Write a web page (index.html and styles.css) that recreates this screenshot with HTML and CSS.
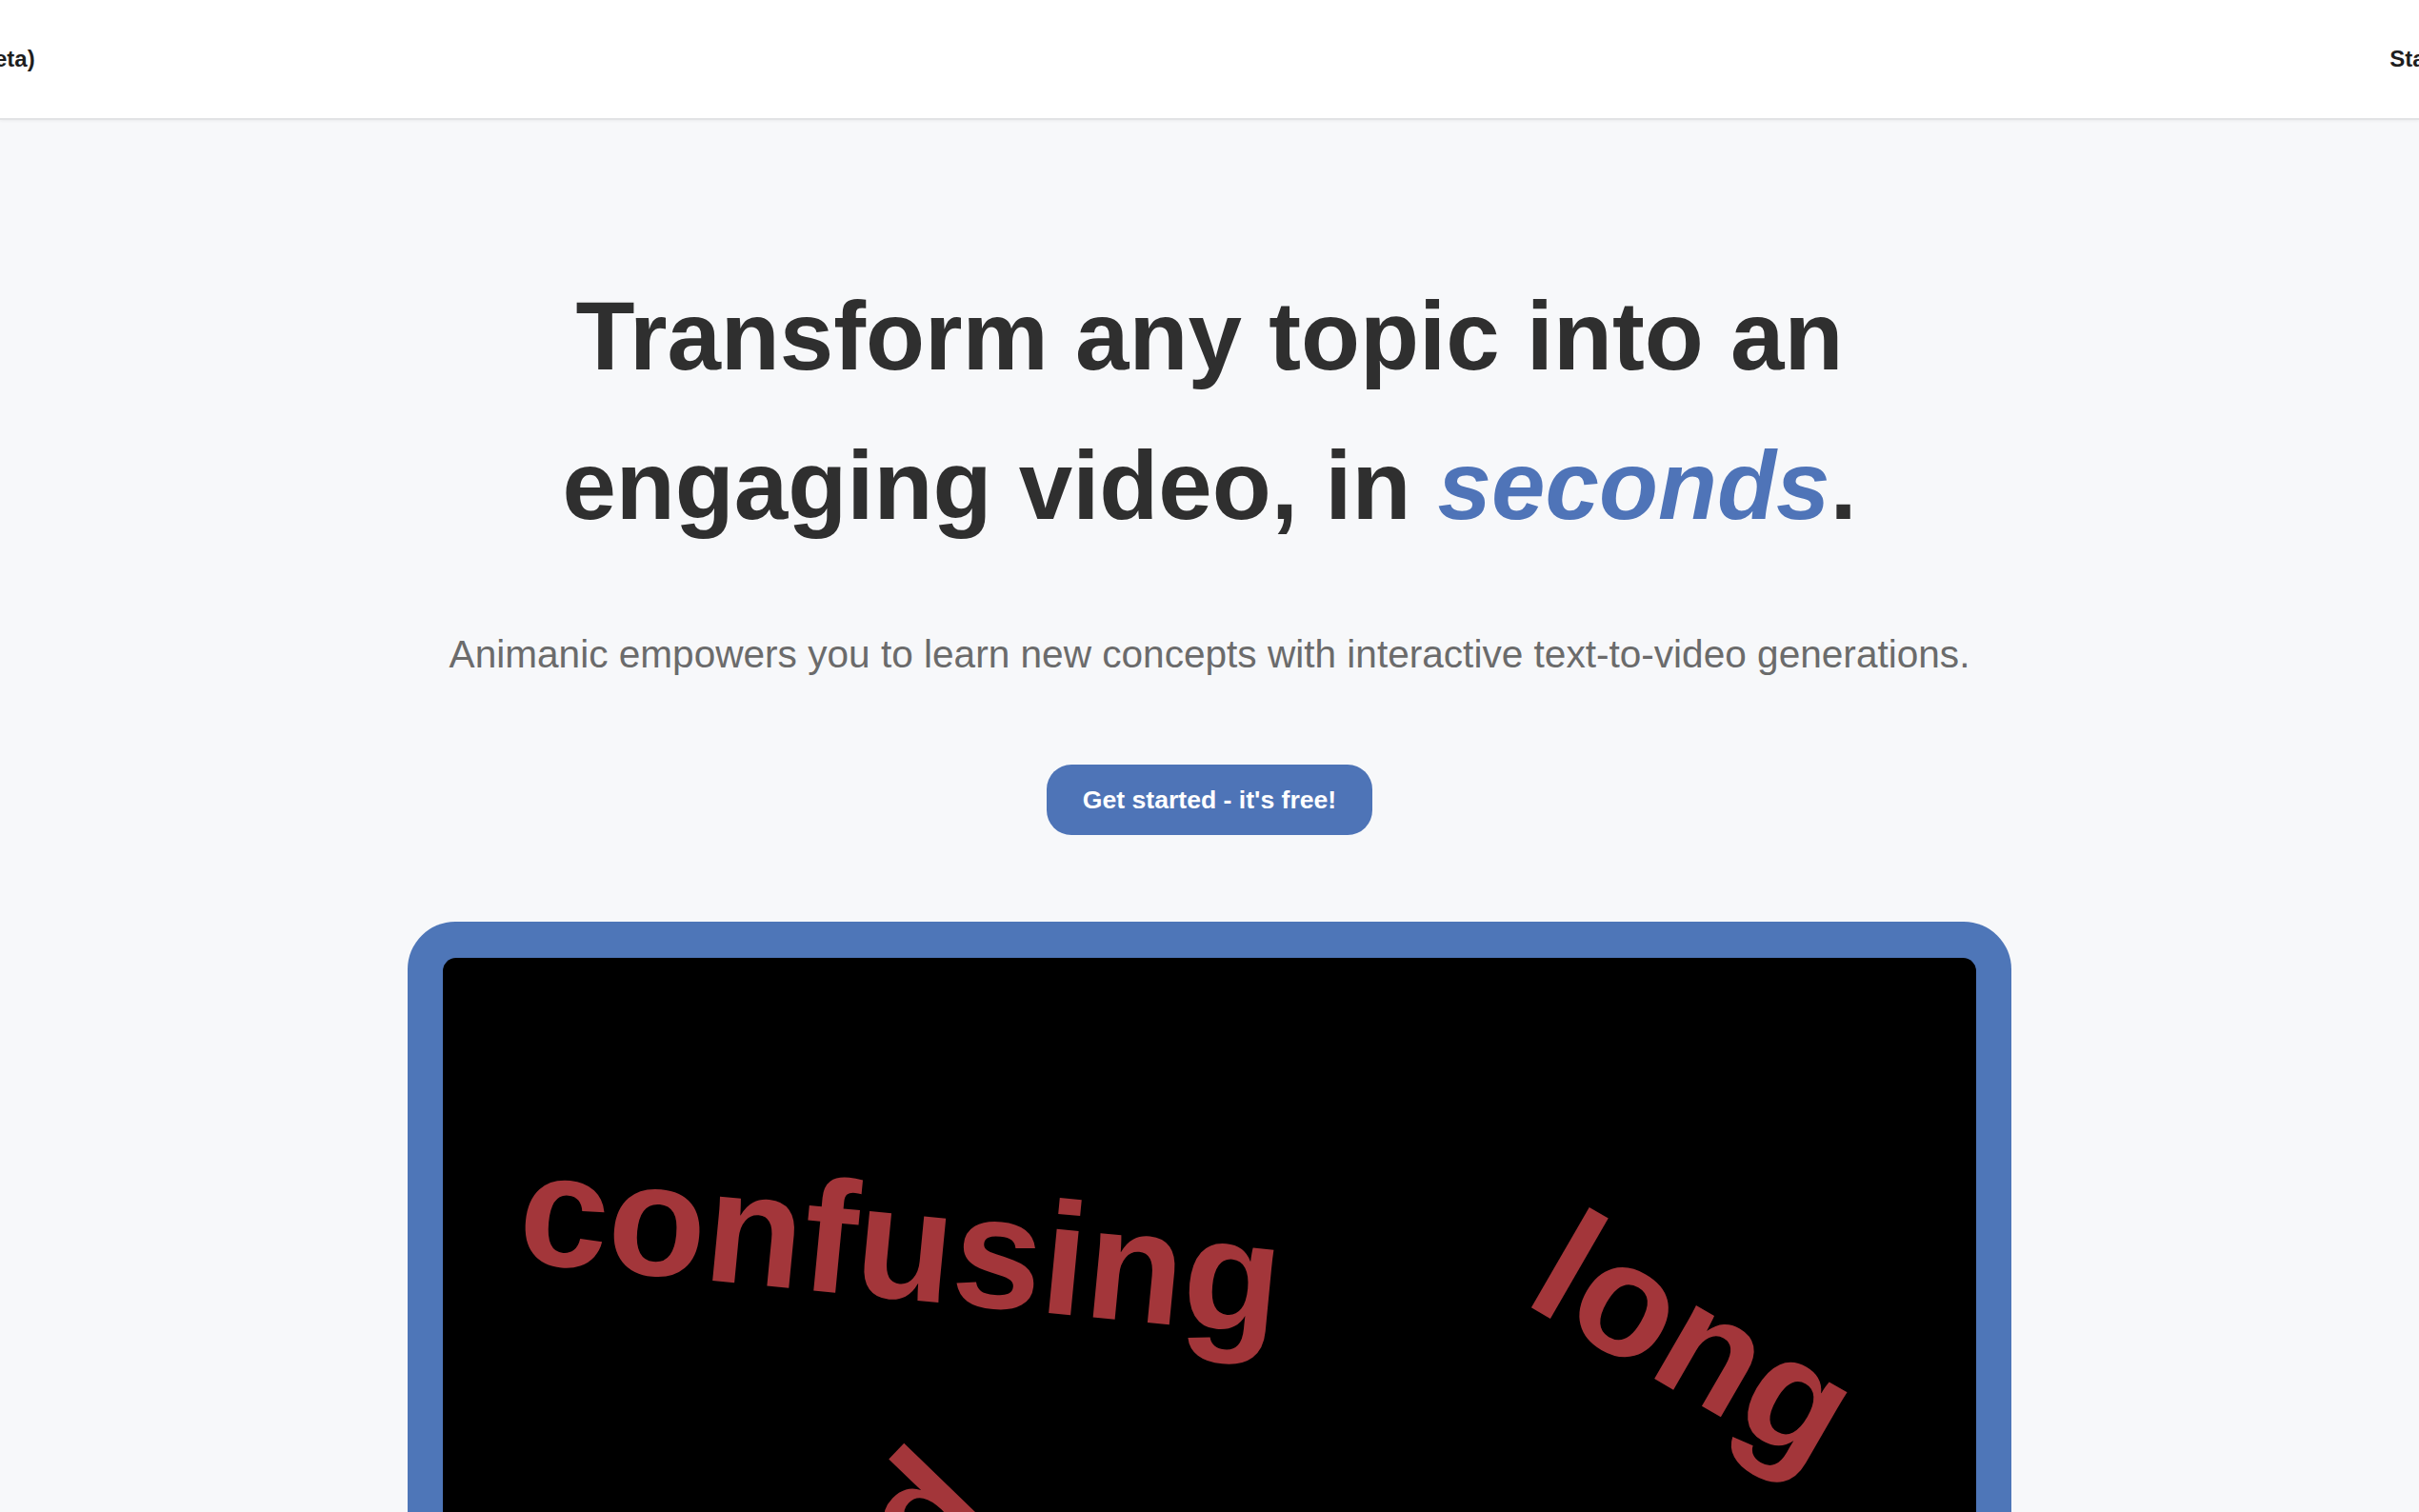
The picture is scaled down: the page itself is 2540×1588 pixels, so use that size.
FILE: index.html
```html
<!DOCTYPE html>
<html lang="en">
<head>
  <meta charset="UTF-8" />
  <meta name="viewport" content="width=device-width, initial-scale=1.0"/>
  <title>Animanic</title>
  <link rel="stylesheet" href="styles.css">
</head>
<body>
  <header class="topbar">
    <nav class="nav">
      <span class="brand">Animanic (Beta)</span>
      <a class="nav-link" href="#">Start creating</a>
    </nav>
  </header>

  <main class="hero">
    <h1 class="headline">Transform any topic into an<br>engaging video, in <em class="accent">seconds</em>.</h1>
    <p class="subtitle">Animanic empowers you to learn new concepts with interactive text-to-video generations.</p>
    <button class="cta">Get started - it's free!</button>

    <div class="frame">
      <div class="screen">
        <span class="word word-confusing">confusing</span>
        <span class="word word-long">long</span>
        <span class="word word-hard">hard</span>
      </div>
    </div>
  </main>
</body>
</html>
```

FILE: styles.css
```css
html, body {
  height: 100%;
}

body {
  margin: 0;
  overflow: hidden;
  background: #f7f8fa;
  font-family: "Liberation Sans", Arial, sans-serif;
  color: #2f2f2f;
}

.topbar {
  height: 124px;
  background: #fff;
  border-bottom: 2px solid #e2e3e5;
  box-shadow: 0 1px 3px rgba(0,0,0,0.05);
  overflow: hidden;
  display: flex;
  align-items: center;
}

.nav {
  flex: 1;
  display: flex;
  justify-content: space-between;
  align-items: center;
  margin: 0 -124px 0 -146px;
  font-size: 24px;
  font-weight: bold;
}

.brand {
  color: #1e1e1e;
}

.nav-link {
  color: #1e1e1e;
  text-decoration: none;
}

.hero {
  display: flex;
  flex-direction: column;
  align-items: center;
  padding-top: 149px;
}

.headline {
  margin: 0;
  font-size: 101.5px;
  line-height: 157px;
  font-weight: bold;
  text-align: center;
  color: #2f2f2f;
}

.accent {
  color: #4f74b8;
  font-style: italic;
}

.subtitle {
  margin: 68px 0 0;
  font-size: 40.6px;
  line-height: 60px;
  color: #6b6b6b;
}

.cta {
  margin-top: 86px;
  height: 74px;
  padding: 0 38px;
  border: none;
  border-radius: 26px;
  background: #4e74b7;
  color: #fff;
  font-family: inherit;
  font-size: 26.6px;
  font-weight: bold;
  cursor: pointer;
}

.frame {
  margin-top: 91px;
  width: 1684px;
  box-sizing: border-box;
  padding: 38px 37px;
  background: #4e76b8;
  border-radius: 50px;
}

.screen {
  position: relative;
  height: 900px;
  background: #000;
  border-radius: 14px;
  overflow: hidden;
}

.word {
  position: absolute;
  font-size: 168px;
  line-height: 1;
  font-weight: bold;
  color: #a3363a;
  white-space: nowrap;
}

.word-confusing {
  left: 80px;
  top: 216px;
  transform: rotate(5.5deg);
}

.word-long {
  left: 1138px;
  top: 316px;
  transform: rotate(30deg);
}

.word-hard {
  left: 216px;
  top: 444px;
  transform-origin: 100% 142px;
  transform: rotate(-46deg);
}
```
